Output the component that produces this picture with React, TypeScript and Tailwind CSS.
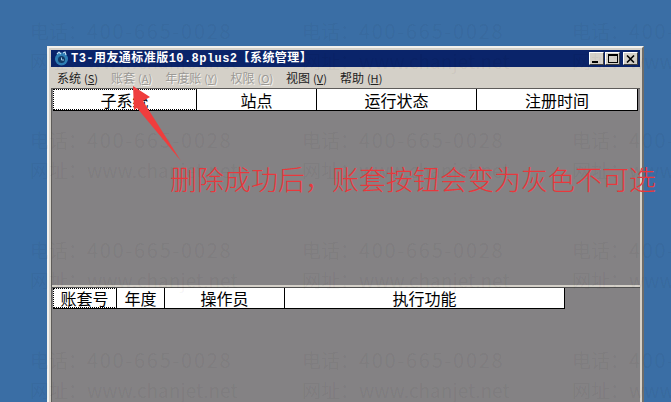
import React from "react";

const cjk = "font-['Noto_Sans_CJK_SC','Liberation_Sans',sans-serif]";

const marks = [31, 140, 250, 360];

const Watermark: React.FC<{ x: number; y: number }> = ({ x, y }) => (
  <div
    className="absolute text-[19px] leading-[26px] whitespace-nowrap text-black/[0.05]"
    style={{ left: x, top: y - 13 }}
  >
    <div>
      电话：<span className="text-[20px] tracking-[1.7px]">400-665-0028</span>
    </div>
    <div className="mt-[4px]">网址：www.chanjet.net</div>
  </div>
);

const Menu: React.FC<{ label: string; hot: string; off?: boolean }> = ({ label, hot, off }) => (
  <span
    className={
      off
        ? "text-[#9c9a96] [text-shadow:1px_1px_0_#f4f3f0] whitespace-nowrap"
        : "text-[#222] whitespace-nowrap"
    }
  >
    {label}
    <span className="ml-[3px] text-[11px]">
      (<span className="underline">{hot}</span>)
    </span>
  </span>
);

const HeadCell: React.FC<{ w: string; label: string; focus?: boolean }> = ({ w, label, focus }) => (
  <div
    className={`${w} h-full flex items-center justify-center border-r border-black text-[16px] leading-none text-black ${
      focus ? "outline outline-1 -outline-offset-1 outline-dotted outline-black" : ""
    }`}
  >
    {label}
  </div>
);

const WinBtn: React.FC<{ children: React.ReactNode; cls?: string }> = ({ children, cls }) => (
  <div
    className={`w-[15px] h-[13px] bg-[#d4d0c8] flex items-center justify-center border-t border-l border-white border-r border-b border-r-[#404040] border-b-[#404040] ${cls ?? ""}`}
  >
    {children}
  </div>
);

export default function App() {
  return (
    <div className={`relative w-[671px] h-[402px] overflow-hidden bg-[#3a6ea5] pt-[46px] pl-[47px] ${cjk}`}>
      {/* window */}
      <div className="w-[597px] h-[380px] bg-[#d4d0c8] border-l-[2px] border-t-[2px] border-t-[#f2f1ed] border-l-[#f2f1ed] border-r-[2px] border-r-[#6f6d69] p-[2px]">
        <div className="h-[17px] bg-[#0a246a] flex items-center pl-[3px] pr-[2px]">
          <svg width="15" height="15" viewBox="0 0 15 15" className="shrink-0">
            <circle cx="7.5" cy="8" r="6.5" fill="#2f7fb5" />
            <circle cx="7.5" cy="8.5" r="3.5" fill="#123a66" />
            <path d="M3 3 L5 1 L7 3 M9 2 L11 1 L12 4" stroke="#bfe0f5" strokeWidth="1.2" fill="none" />
            <path d="M7.5 6.5 V9 H10" stroke="#9fd0ee" strokeWidth="1" fill="none" />
          </svg>
          <span className="ml-[2px] text-[12px] leading-none font-bold tracking-[0.45px] text-white whitespace-nowrap font-['Liberation_Mono','Noto_Sans_CJK_SC',monospace]">
            T3-用友通标准版10.8plus2【系统管理】
          </span>
          <div className="ml-auto flex">
            <WinBtn>
              <div className="w-[6px] h-[2px] bg-black mt-[6px] mr-[3px]" />
            </WinBtn>
            <WinBtn cls="ml-[1px]">
              <div className="w-[10px] h-[9px] border border-black border-t-2" />
            </WinBtn>
            <WinBtn cls="ml-[3px]">
              <svg width="9" height="8" viewBox="0 0 9 8">
                <path d="M1 0.5 L8 7.5 M8 0.5 L1 7.5" stroke="#000" strokeWidth="1.6" />
              </svg>
            </WinBtn>
          </div>
        </div>

        <div className="h-[21px] flex items-center gap-[13px] pl-[6px] text-[12px] leading-none">
          <Menu label="系统" hot="S" />
          <Menu label="账套" hot="A" off />
          <Menu label="年度账" hot="Y" off />
          <Menu label="权限" hot="O" off />
          <Menu label="视图" hot="V" />
          <Menu label="帮助" hot="H" />
        </div>

        <div className="h-[314px] bg-[#848284] border-t-[1px] border-l-[1px] border-[#5e5c5a] flex flex-col">
          <div className="h-[22px] flex bg-white border-b border-black ml-[1px] mr-[2px] w-[585px] shrink-0">
            <HeadCell w="w-[144px]" label="子系统" focus />
            <HeadCell w="w-[120px]" label="站点" />
            <HeadCell w="w-[160px]" label="运行状态" />
            <HeadCell w="w-[161px]" label="注册时间" />
          </div>
          <div className="h-[174px] shrink-0" />
          <div className="h-[3px] shrink-0 bg-[#d4d0c8] border-b border-[#505050]" />
          <div className="h-[21px] flex bg-white border-b border-black ml-[1px] w-[512px] shrink-0">
            <HeadCell w="w-[64px]" label="账套号" focus />
            <HeadCell w="w-[48px]" label="年度" />
            <HeadCell w="w-[120px]" label="操作员" />
            <HeadCell w="w-[280px]" label="执行功能" />
          </div>
        </div>
      </div>

      {/* watermark over everything */}
      {marks.map((y) =>
        [30, 302, 572].map((x) => <Watermark key={`${x}-${y}`} x={x} y={y} />)
      )}

      {/* annotation arrow */}
      <svg width="671" height="402" className="absolute left-0 top-0 pointer-events-none">
        <polygon points="133,86 150,97 143,101 181,161 137,108 134,110" fill="#ef3d3d" />
      </svg>
      <div className="absolute left-[170px] top-[161px] text-[27px] leading-[36px] font-light text-[#e8383c] whitespace-nowrap">
        删除成功后，账套按钮会变为灰色不可选
      </div>
    </div>
  );
}
